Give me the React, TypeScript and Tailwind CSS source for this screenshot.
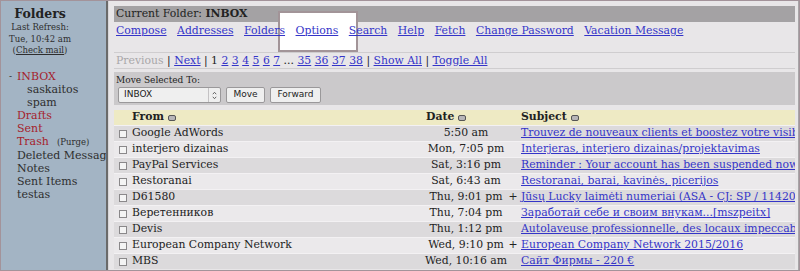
import React from 'react';

const serif = "font-['DejaVu_Serif',serif]";
const sans = "font-['DejaVu_Sans',sans-serif]";

const navLinks = ['Compose', 'Addresses', 'Folders', 'Options', 'Search', 'Help', 'Fetch', 'Change Password', 'Vacation Message'];

type Msg = { from: string; date: string; plus?: boolean; subject: string };

const messages: Msg[] = [
  { from: 'Google AdWords', date: '5:50 am', subject: 'Trouvez de nouveaux clients et boostez votre visibilité' },
  { from: 'interjero dizainas', date: 'Mon, 7:05 pm', subject: 'Interjeras, interjero dizainas/projektavimas' },
  { from: 'PayPal Services', date: 'Sat, 3:16 pm', subject: 'Reminder : Your account has been suspended now' },
  { from: 'Restoranai', date: 'Sat, 6:43 am', subject: 'Restoranai, barai, kavinės, picerijos' },
  { from: 'D61580', date: 'Thu, 9:01 pm', plus: true, subject: 'Jūsų Lucky laimėti numeriai (ASA - CJ: SP / 11420 - 2015)' },
  { from: 'Веретенников', date: 'Thu, 7:04 pm', subject: 'Заработай себе и своим внукам...[mszpeitx]' },
  { from: 'Devis', date: 'Thu, 1:12 pm', subject: 'Autolaveuse professionnelle, des locaux impeccables' },
  { from: 'European Company Network', date: 'Wed, 9:10 pm', plus: true, subject: 'European Company Network 2015/2016' },
  { from: 'MBS', date: 'Wed, 10:16 am', subject: 'Сайт Фирмы - 220 €' },
];

const SortIcon = () => (
  <span className="inline-block w-[8px] h-[6px] ml-[4px] rounded-[2px] border border-[#555] bg-[#b8b6b8] align-middle" />
);

const Sidebar = () => (
  <div className={`w-[105px] shrink-0 bg-[#a3b4c4] text-[#2e2e2e] ${serif} overflow-hidden pt-[5px]`}>
    <div className="w-[78px] text-center">
      <div className="text-[12.5px] leading-[16px] font-bold text-[#222]">Folders</div>
      <div className="text-[8.5px] leading-[11.5px]">Last Refresh:</div>
      <div className="text-[8.5px] leading-[11.5px]">Tue, 10:42 am</div>
      <div className="text-[8.5px] leading-[11.5px]">
        (<span className="underline">Check mail</span>)
      </div>
    </div>
    <div className="mt-[13px] text-[11px] leading-[13px] whitespace-nowrap">
      <div className="flex">
        <span className="w-[16px] pl-[8px] text-[9px]">-</span>
        <span className="text-[#a5222c]">INBOX</span>
      </div>
      <div className="pl-[26px]">saskaitos</div>
      <div className="pl-[26px]">spam</div>
      <div className="pl-[16px] text-[#a5222c]">Drafts</div>
      <div className="pl-[16px] text-[#a5222c]">Sent</div>
      <div className="pl-[16px]">
        <span className="text-[#a5222c]">Trash</span>
        <span className="ml-[8px] text-[8.5px]">(Purge)</span>
      </div>
      <div className="pl-[16px]">Deleted Messages</div>
      <div className="pl-[16px]">Notes</div>
      <div className="pl-[16px]">Sent Items</div>
      <div className="pl-[16px]">testas</div>
    </div>
  </div>
);

const Link = ({ children }: { children: React.ReactNode }) => (
  <span className="text-[#3434c8] underline">{children}</span>
);

const App: React.FC = () => {
  return (
    <div className="relative w-[800px] h-[271px] overflow-hidden border border-[#a3939a] flex bg-[#e8e6e8]">
      <Sidebar />
      <div className="w-[2px] shrink-0 bg-[#6a6a6a]" />
      <div className="w-[1px] shrink-0 bg-[#d8d6d8]" />

      <div className={`flex-1 min-w-0 pl-[5px] pr-[3px] pt-[5px] ${serif} text-[10.85px] text-[#222] border-r border-[#a8a6a8]`}>
        <div className="h-[16px] leading-[16px] bg-[#a4a2a4] pl-[2px]">
          Current Folder: <b>INBOX</b>
        </div>

        <div className="relative z-10 h-[30px] pt-[1px] pl-[2px] flex gap-[10.5px] leading-[16px] whitespace-nowrap">
          {navLinks.map(l => (
            <Link key={l}>{l}</Link>
          ))}
        </div>

        <div className="h-[17px] border-y border-[#cfcdcf] pl-[2px] leading-[15px] whitespace-nowrap">
          <span className="text-[#a8a6a8]">Previous</span> | <Link>Next</Link> | 1{' '}
          {['2', '3', '4', '5', '6', '7'].map(n => (
            <React.Fragment key={n}>
              <Link>{n}</Link>{' '}
            </React.Fragment>
          ))}
          ...{' '}
          {['35', '36', '37', '38'].map(n => (
            <React.Fragment key={n}>
              <Link>{n}</Link>{' '}
            </React.Fragment>
          ))}
          | <Link>Show All</Link> | <Link>Toggle All</Link>
        </div>

        <div className="mt-[3px] h-[33px] bg-[#cbc9cb] pl-[2px] pt-[2px]">
          <div className="text-[9px] leading-[12px]">Move Selected To:</div>
          <div className={`mt-[1px] flex gap-[5px] ${sans} text-[9px] text-[#222]`}>
            <div className="w-[103px] h-[16px] ml-[2px] flex items-center justify-between border border-[#9a989a] rounded-[2px] bg-[#efefef]">
              <span className="pl-[5px]">INBOX</span>
              <span className="h-full flex items-center border-l border-[#c4c2c4] px-[3px]">
                <svg width="5" height="9" viewBox="0 0 5 9" fill="none" stroke="#555" strokeWidth="0.9">
                  <path d="M0.8 3.2 L2.5 1.3 L4.2 3.2" />
                  <path d="M0.8 5.8 L2.5 7.7 L4.2 5.8" />
                </svg>
              </span>
            </div>
            <div className="w-[39px] h-[16px] flex items-center justify-center border border-[#9a989a] rounded-[2px] bg-[#efefef]">
              Move
            </div>
            <div className="w-[51px] h-[16px] flex items-center justify-center border border-[#9a989a] rounded-[2px] bg-[#efefef]">
              Forward
            </div>
          </div>
        </div>

        <div className="mt-[5px] bg-[#f3f1f3]">
          <div className="h-[15px] flex items-center bg-[#eeeac4] font-bold text-[#222] whitespace-nowrap">
            <div className="w-[17px] shrink-0" />
            <div className="w-[293px] shrink-0 flex items-center pl-[1px]">
              From<SortIcon />
            </div>
            <div className="w-[84px] shrink-0 flex items-center pl-[2px]">
              Date<SortIcon />
            </div>
            <div className="w-[10px] shrink-0" />
            <div className="flex-1 flex items-center pl-[3px]">
              Subject<SortIcon />
            </div>
          </div>
          {messages.map((m, i) => (
            <div
              key={i}
              className={`h-[16px] border-t border-[#f3f1f3] flex items-center whitespace-nowrap ${
                i % 2 === 0 ? 'bg-[#dcdadc]' : 'bg-[#ebe9eb]'
              }`}
            >
              <div className="w-[17px] shrink-0 flex justify-center">
                <span className="w-[8px] h-[8px] border border-[#8a888a] bg-[#f4f4f4]" />
              </div>
              <div className="w-[293px] shrink-0 pl-[1px] overflow-hidden">{m.from}</div>
              <div className="w-[84px] shrink-0 text-center">{m.date}</div>
              <div className="w-[10px] shrink-0 text-center">{m.plus ? '+' : ''}</div>
              <div className="flex-1 min-w-0 pl-[3px] overflow-hidden">
                <Link>{m.subject}</Link>
              </div>
            </div>
          ))}
        </div>
      </div>

      <div className="absolute z-0 left-[277px] top-[10px] w-[80px] h-[41px] border-2 border-[#a29498] bg-white" />
    </div>
  );
};

export default App;
